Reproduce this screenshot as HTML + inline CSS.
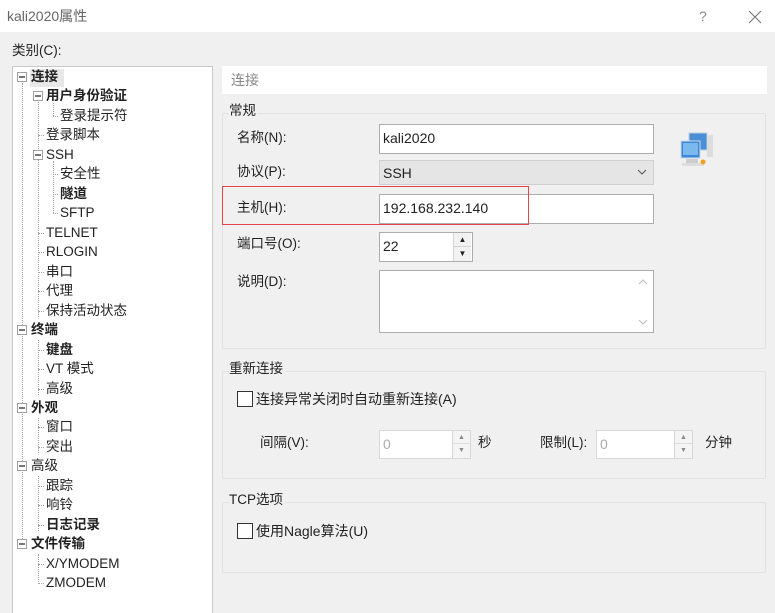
<!DOCTYPE html>
<html><head><meta charset="utf-8"><style>
*{box-sizing:border-box;margin:0;padding:0}
html,body{width:775px;height:613px;overflow:hidden}
body{background:#f0f0f0;font-family:"Liberation Sans","Microsoft YaHei","Noto Sans CJK SC",sans-serif;font-size:13.5px;color:#222;position:relative}
.a{position:absolute;white-space:nowrap}
.t{line-height:16px}
.box{position:absolute;background:#fff;border:1px solid #adadad}
.grp{position:absolute;border:1px solid #e2e2e2;border-radius:2px}
.leg{position:absolute;background:#f0f0f0;padding-right:2px;line-height:16px}
.exp{position:absolute;width:10px;height:10px;border:1px solid #a0a0a0;background:#fff}
.exp:after{content:"";position:absolute;left:1px;top:3px;width:6px;height:2px;background:#777}
.vl{position:absolute;border-left:1px dotted #a0a0a0;width:0}
.hl{position:absolute;border-top:1px dotted #a0a0a0;height:0}
.b{font-weight:bold}
.spin{position:absolute;width:18px;border-left:1px solid #d6d6d6;background:#f2f2f2}
.cb{position:absolute;width:16px;height:16px;border:1px solid #333;background:#fff}
</style></head><body>
<div class="a" style="left:0;top:0;width:775px;height:32px;background:#fff"></div>
<div class="a t" style="left:7px;top:8px;color:#666;font-size:14px">kali2020属性</div>
<div class="a t" style="left:699px;top:8px;color:#888;font-size:14px">?</div>
<svg class="a" style="left:748px;top:10px" width="14" height="14"><path d="M1 1L13 13M13 1L1 13" stroke="#777" stroke-width="1.1"/></svg>

<div class="a t" style="left:12px;top:43px">类别(C):</div>

<div class="box" style="left:12px;top:66px;width:201px;height:560px;border-color:#c8c8c8"></div>
<div class="a" style="left:30px;top:69px;width:34px;height:18px;background:#e8e8e8"></div>
<div class="vl" style="left:22px;top:83px;height:464px"></div>
<div class="vl" style="left:38px;top:102px;height:215px"></div>
<div class="vl" style="left:38px;top:340px;height:55px"></div>
<div class="vl" style="left:38px;top:418px;height:35px"></div>
<div class="vl" style="left:38px;top:476px;height:55px"></div>
<div class="vl" style="left:38px;top:554px;height:30px"></div>
<div class="vl" style="left:53px;top:103px;height:13px"></div>
<div class="vl" style="left:53px;top:161px;height:52px"></div>
<div id="tree"></div>
<script>
var items=[[0,"连接",1,1],[1,"用户身份验证",1,1],[2,"登录提示符",0,0],[1,"登录脚本",0,0],[1,"SSH",0,1],[2,"安全性",0,0],[2,"隧道",1,0],[2,"SFTP",0,0],[1,"TELNET",0,0],[1,"RLOGIN",0,0],[1,"串口",0,0],[1,"代理",0,0],[1,"保持活动状态",0,0],[0,"终端",1,1],[1,"键盘",1,0],[1,"VT 模式",0,0],[1,"高级",0,0],[0,"外观",1,1],[1,"窗口",0,0],[1,"突出",0,0],[0,"高级",0,1],[1,"跟踪",0,0],[1,"响铃",0,0],[1,"日志记录",1,0],[0,"文件传输",1,1],[1,"X/YMODEM",0,0],[1,"ZMODEM",0,0]];
var h="";
items.forEach(function(it,i){var y=77+i*19.47;var lv=it[0];
var tx=[31,46,60][lv];
if(it[3]){var bx=[17,33][lv];h+='<div class="exp" style="left:'+bx+'px;top:'+(y-5)+'px"></div>';}
else{var lx=[22,38,53][lv];h+='<div class="hl" style="left:'+lx+'px;top:'+y+'px;width:'+(tx-lx-2)+'px"></div>';}
h+='<div class="a t'+(it[2]?' b':'')+'" style="left:'+tx+'px;top:'+(y-8)+'px">'+it[1]+'</div>';});
document.getElementById("tree").innerHTML=h;
</script>

<div class="a" style="left:222px;top:66px;width:545px;height:28px;background:#fff"></div>
<div class="a t" style="left:231px;top:72px;color:#888;font-size:14px">连接</div>

<div class="grp" style="left:222px;top:113px;width:544px;height:236px"></div>
<div class="leg" style="left:229px;top:103px">常规</div>
<div class="a t" style="left:237px;top:130px">名称(N):</div>
<div class="box" style="left:379px;top:124px;width:275px;height:30px;padding:5px 3px;font-size:14px">kali2020</div>
<div class="a t" style="left:237px;top:164px">协议(P):</div>
<div class="a" style="left:379px;top:160px;width:275px;height:25px;background:#e5e5e5;border:1px solid #d0d0d0;padding:4px 3px;font-size:14px">SSH</div>
<svg class="a" style="left:637px;top:168px" width="10" height="8"><path d="M1 2L5 6L9 2" stroke="#555" fill="none"/></svg>
<div class="a t" style="left:237px;top:200px">主机(H):</div>
<div class="box" style="left:379px;top:194px;width:275px;height:30px;padding:5px 3px;font-size:14px">192.168.232.140</div>
<div class="a" style="left:222px;top:186px;width:307px;height:39px;border:1.5px solid #e04848"></div>
<div class="a t" style="left:237px;top:236px">端口号(O):</div>
<div class="box" style="left:379px;top:232px;width:94px;height:30px;padding:5px 3px;font-size:14px">22</div>
<div class="spin" style="left:453px;top:233px;height:28px"><div style="height:14px;border-bottom:1px solid #d6d6d6;text-align:center;font-size:8px;line-height:14px">▲</div><div style="text-align:center;font-size:8px;line-height:13px">▼</div></div>
<div class="a t" style="left:237px;top:274px">说明(D):</div>
<div class="box" style="left:379px;top:270px;width:275px;height:63px"></div>
<svg class="a" style="left:637px;top:276px" width="12" height="52"><path d="M2 8L6 4L10 8M2 44L6 48L10 44" stroke="#bbb" fill="none"/></svg>
<svg class="a" style="left:678px;top:131px" width="40" height="40">
<rect x="11" y="2" width="18" height="17" fill="#4a8ed8" stroke="#bcd" /><rect x="29" y="4" width="6" height="22" fill="#ddd"/>
<rect x="3" y="10" width="19" height="17" fill="#3e86d6" stroke="#cde"/><rect x="5" y="12" width="15" height="12" fill="#7ab8ee"/>
<rect x="8" y="28" width="12" height="4" fill="#ccc"/><rect x="4" y="32" width="22" height="3" fill="#ddd"/><circle cx="25" cy="31" r="2.5" fill="#f0a020"/></svg>

<div class="grp" style="left:222px;top:371px;width:544px;height:108px"></div>
<div class="leg" style="left:229px;top:361px">重新连接</div>
<div class="cb" style="left:237px;top:391px"></div>
<div class="a t" style="left:256px;top:391px;font-size:14px">连接异常关闭时自动重新连接(A)</div>
<div class="a t" style="left:260px;top:435px">间隔(V):</div>
<div class="box" style="left:379px;top:430px;width:92px;height:29px;border-color:#d8d8d8;color:#aaa;padding:5px 3px;font-size:14px">0</div>
<div class="spin" style="left:452px;top:431px;height:27px;background:#f4f4f4"><div style="height:13px;border-bottom:1px solid #ddd;text-align:center;font-size:7px;line-height:13px;color:#888">▲</div><div style="text-align:center;font-size:7px;line-height:13px;color:#888">▼</div></div>
<div class="a t" style="left:478px;top:435px">秒</div>
<div class="a t" style="left:540px;top:435px">限制(L):</div>
<div class="box" style="left:596px;top:430px;width:97px;height:29px;border-color:#d8d8d8;color:#aaa;padding:5px 3px;font-size:14px">0</div>
<div class="spin" style="left:674px;top:431px;height:27px;background:#f4f4f4"><div style="height:13px;border-bottom:1px solid #ddd;text-align:center;font-size:7px;line-height:13px;color:#888">▲</div><div style="text-align:center;font-size:7px;line-height:13px;color:#888">▼</div></div>
<div class="a t" style="left:705px;top:435px">分钟</div>

<div class="grp" style="left:222px;top:502px;width:544px;height:71px"></div>
<div class="leg" style="left:229px;top:492px">TCP选项</div>
<div class="cb" style="left:237px;top:523px"></div>
<div class="a t" style="left:256px;top:523px;font-size:14px">使用Nagle算法(U)</div>
</body></html>
